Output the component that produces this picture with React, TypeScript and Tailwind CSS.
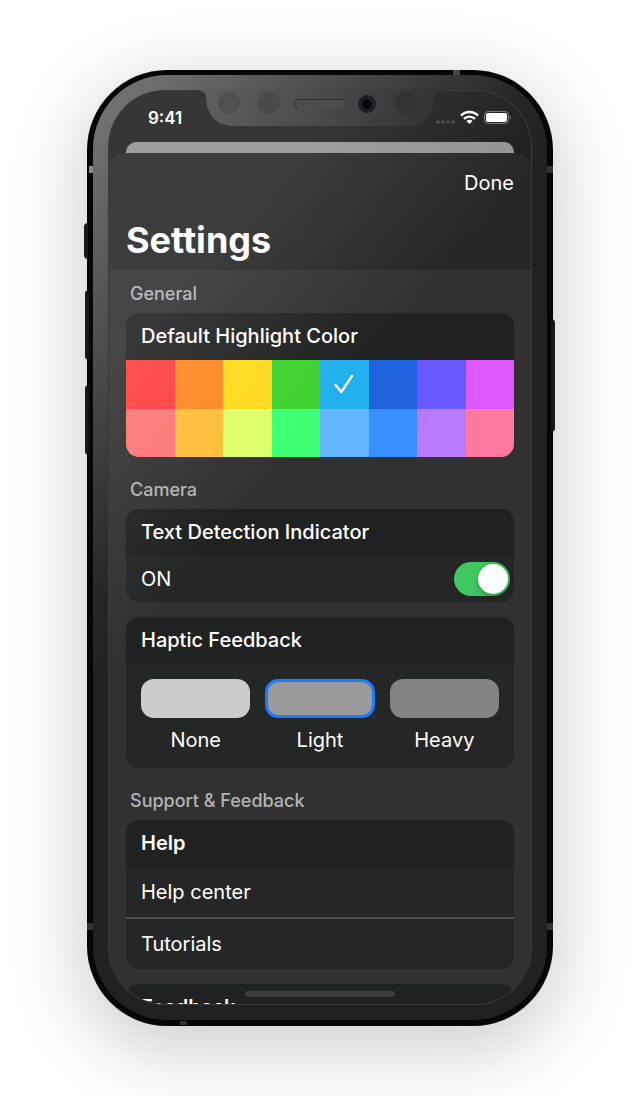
import { useState, type ReactNode } from "react";

const SWATCHES = [
  { name: "Red", color: "bg-[#ff3e3e]" },
  { name: "Orange", color: "bg-[#ff8822]" },
  { name: "Yellow", color: "bg-[#ffda1c]" },
  { name: "Green", color: "bg-[#3ed22f]" },
  { name: "Sky blue", color: "bg-[#22afed]" },
  { name: "Blue", color: "bg-[#1f62dc]" },
  { name: "Indigo", color: "bg-[#6a58ff]" },
  { name: "Magenta", color: "bg-[#db59ff]" },
  { name: "Light red", color: "bg-[#ff7575]" },
  { name: "Light orange", color: "bg-[#ffbd38]" },
  { name: "Lime", color: "bg-[#dfff69]" },
  { name: "Mint", color: "bg-[#3dff73]" },
  { name: "Light sky blue", color: "bg-[#64b5ff]" },
  { name: "Light blue", color: "bg-[#388fff]" },
  { name: "Lavender", color: "bg-[#b87aff]" },
  { name: "Pink", color: "bg-[#ff789f]" },
];

const HAPTICS = [
  { name: "None", color: "bg-[#cccccc]" },
  { name: "Light", color: "bg-[#9a9a9a]" },
  { name: "Heavy", color: "bg-[#838383]" },
];

function Notch() {
  return (
    <svg
      className="pointer-events-none absolute top-[14px] left-1/2 z-20 h-[37px] w-[244px] -translate-x-1/2"
      viewBox="0 -1 244 37"
      aria-hidden="true"
    >
      <defs>
        <linearGradient id="notch" gradientUnits="userSpaceOnUse" x1="0" y1="0" x2="240" y2="60">
          <stop offset="0" stopColor="#606060" />
          <stop offset="0.5" stopColor="#4a4a4a" />
          <stop offset="1" stopColor="#303030" />
        </linearGradient>
        <pattern id="mesh" width="3" height="3" patternUnits="userSpaceOnUse">
          <rect width="3" height="3" fill="#505050" />
          <circle cx="1" cy="1" r="0.8" fill="#404040" />
        </pattern>
      </defs>
      <path
        d="M2 -1H242V1C238 1 236 3 236 8C235 25 226 36 208 36H36C18 36 9 25 8 8C8 3 6 1 2 1Z"
        fill="url(#notch)"
      />
      <circle cx="31" cy="13" r="11" fill="#505050" />
      <circle cx="71" cy="13" r="11" fill="#4a4a4a" />
      <circle cx="208" cy="13" r="11" fill="#323232" />
      <rect x="96.5" y="9.5" width="51" height="9" rx="4.5" fill="url(#mesh)" />
      <path
        d="M100 18C94 15 96 9.500 101 9.500H143C147 9.500 148.500 13 147 16"
        fill="none"
        stroke="#303030"
      />
      <circle cx="169" cy="14" r="9" fill="#1b1d27" />
      <circle cx="169" cy="14" r="4.5" fill="#05060b" />
    </svg>
  );
}

function StatusIcons() {
  return (
    <svg className="h-4 w-[76px]" viewBox="0 0 76 16" aria-hidden="true">
      <g fill="#484a4a">
        <circle cx="3" cy="12" r="1.8" />
        <circle cx="8" cy="12" r="1.8" />
        <circle cx="13" cy="12" r="1.8" />
        <circle cx="18" cy="12" r="1.8" />
      </g>
      <g fill="none" stroke="#ffffff" strokeWidth="2.4">
        <path d="M26 5.6C30.8 0.8 38.2 0.8 43 5.6" />
        <path d="M29 8.9C32.2 5.9 36.8 5.9 40 8.9" />
      </g>
      <path d="M31.5 11C33.2 9.3 35.8 9.3 37.5 11L34.5 14Z" fill="#ffffff" />
      <rect x="49.5" y="1.5" width="24" height="12" rx="3.5" fill="none" stroke="#777979" />
      <rect x="51" y="3" width="21" height="9" rx="2" fill="#ffffff" />
      <path d="M74.8 5.5C76.2 6.2 76.2 8.8 74.8 9.5Z" fill="#777979" />
    </svg>
  );
}

function SectionTitle({ children }: { children: ReactNode }) {
  return <h2 className="mb-2 px-1 text-lg leading-[22px] font-medium text-[#b4b4b4]">{children}</h2>;
}

function Card({ title, strong = false, children }: { title: string; strong?: boolean; children?: ReactNode }) {
  return (
    <section className="overflow-hidden rounded-[13px] bg-[#252626]">
      <h3
        className={`bg-[#202121] px-[15px] py-[11px] text-xl leading-[25px] ${strong ? "font-semibold" : "font-medium"}`}
      >
        {title}
      </h3>
      {children}
    </section>
  );
}

function HighlightPicker() {
  const [selected, setSelected] = useState("Sky blue");
  return (
    <div role="radiogroup" aria-label="Default Highlight Color" className="grid grid-cols-8">
      {SWATCHES.map(({ name, color }) => (
        <label key={name} className={`relative grid aspect-square place-items-center ${color}`}>
          <input
            type="radio"
            name="highlight"
            aria-label={name}
            checked={selected === name}
            onChange={() => setSelected(name)}
            className="absolute inset-0 cursor-pointer appearance-none"
          />
          {selected === name && (
            <svg className="pointer-events-none relative h-5 w-5" viewBox="0 0 20 20" aria-hidden="true">
              <path
                d="M1.5 11L7.3 18L18 2"
                fill="none"
                stroke="#ffffff"
                strokeWidth="2.4"
                strokeLinecap="round"
                strokeLinejoin="round"
              />
            </svg>
          )}
        </label>
      ))}
    </div>
  );
}

function DetectionRow() {
  const [on, setOn] = useState(true);
  return (
    <label className="flex items-center justify-between py-[6px] pr-1 pl-[15px] text-xl leading-6">
      <span>{on ? "ON" : "OFF"}</span>
      <input
        type="checkbox"
        role="switch"
        aria-label="Text Detection Indicator"
        checked={on}
        onChange={() => setOn(!on)}
        className="flex h-[34px] w-14 cursor-pointer appearance-none items-center rounded-full bg-[#555555] px-0.5 before:h-[30px] before:w-[30px] before:rounded-full before:bg-white before:shadow-[0_3px_6px_rgba(0,0,0,0.25)] checked:justify-end checked:bg-[#3fc85f]"
      />
    </label>
  );
}

function HapticPicker() {
  const [selected, setSelected] = useState("Light");
  return (
    <div role="radiogroup" aria-label="Haptic Feedback" className="grid grid-cols-3 gap-[15px] px-[15px] pt-[15px] pb-4">
      {HAPTICS.map(({ name, color }) => (
        <label key={name} className="flex cursor-pointer flex-col items-center gap-[10px] text-xl leading-6">
          <input
            type="radio"
            name="haptic"
            checked={selected === name}
            onChange={() => setSelected(name)}
            className={`h-[39px] w-full cursor-pointer appearance-none rounded-[13px] checked:border-[3px] checked:border-[#1d7aff] ${color}`}
          />
          {name}
        </label>
      ))}
    </div>
  );
}

function Hardware() {
  return (
    <div aria-hidden="true" className="pointer-events-none">
      <span className="absolute top-[16%] -left-[3px] h-9 w-1 rounded-l-sm bg-[#1a1a1d]" />
      <span className="absolute top-[23%] -left-0.5 h-[70px] w-1 rounded-l-sm bg-[#16171a]" />
      <span className="absolute top-[33%] -left-0.5 h-[70px] w-1 rounded-l-sm bg-[#16171a]" />
      <span className="absolute top-[26%] -right-0.5 h-[113px] w-1 rounded-r-sm bg-[#16171a]" />
      <span className="absolute top-[10%] left-[2px] h-[7px] w-1 bg-[#8a8a8a]" />
      <span className="absolute top-[10%] right-0 h-[7px] w-[6px] bg-[#333333]" />
      <span className="absolute bottom-[10%] left-0 h-[7px] w-[6px] bg-[#333333]" />
      <span className="absolute right-0 bottom-[10%] h-[7px] w-[6px] bg-[#333333]" />
      <span className="absolute top-0 right-[20%] h-[5px] w-[7px] bg-[#454545]" />
      <span className="absolute bottom-px left-[20%] h-1 w-[7px] bg-[#333333]" />
    </div>
  );
}

export default function App() {
  return (
    <div className="flex min-h-screen items-center justify-center bg-white px-5 py-[70px] font-['Inter','Liberation_Sans',sans-serif] text-white">
      <div className="relative flex aspect-[466/956] w-full max-w-[466px] rounded-[80px] bg-[#050607] p-[6px] pt-[5px] shadow-[0_18px_76px_6px_rgba(0,0,0,0.2)]">
        <Hardware />
        <div className="relative flex min-w-0 flex-1 rounded-[74px] bg-[linear-gradient(130deg,#787878_0%,#6c6c6c_6%,#565656_15%,#484848_21%,#363636_29%,#252525_36%,#212121_42%)] p-[15px]">
          <Notch />
          <div className="relative flex min-w-0 flex-1 flex-col overflow-hidden rounded-[57px] border border-white/12 bg-[#1e2020]">
            <div className="flex h-[51px] shrink-0 items-center justify-between pt-[3px] pr-5 pl-[39px]">
              <span className="text-[17px] leading-5 font-semibold">9:41</span>
              <StatusIcons />
            </div>
            <div className="mx-[17px] h-[11px] shrink-0 rounded-t-[10px] bg-[#939393]" />

            <header className="shrink-0 rounded-t-[14px] bg-[#272727] px-[17px] pt-[18px] pb-2">
              <div className="flex justify-end">
                <button type="button" className="cursor-pointer text-xl leading-6">
                  Done
                </button>
              </div>
              <h1 className="mt-[23px] text-4xl leading-[44px] font-bold">Settings</h1>
            </header>

            <main className="min-h-0 flex-1 overflow-hidden bg-[#313132] px-[17px] pt-[13px]">
              <SectionTitle>General</SectionTitle>
              <Card title="Default Highlight Color">
                <HighlightPicker />
              </Card>

              <div className="mt-[22px]">
                <SectionTitle>Camera</SectionTitle>
                <div className="flex flex-col gap-[15px]">
                  <Card title="Text Detection Indicator">
                    <DetectionRow />
                  </Card>
                  <Card title="Haptic Feedback">
                    <HapticPicker />
                  </Card>
                </div>
              </div>

              <div className="mt-[22px]">
                <SectionTitle>Support &amp; Feedback</SectionTitle>
                <div className="flex flex-col gap-[15px]">
                  <Card title="Help" strong>
                    <nav className="flex flex-col divide-y-2 divide-[#4b4b4b] text-xl leading-6">
                      <a href="#help-center" className="px-[15px] py-[13px]">
                        Help center
                      </a>
                      <a href="#tutorials" className="px-[15px] py-[13px]">
                        Tutorials
                      </a>
                    </nav>
                  </Card>
                  <Card title="Feedback" strong />
                </div>
              </div>
            </main>

            <div className="pointer-events-none absolute inset-0 bg-[linear-gradient(130deg,rgba(255,255,255,0.1)_0%,rgba(255,255,255,0.1)_20%,rgba(255,255,255,0)_41%)]" />
            <div className="pointer-events-none absolute bottom-[7px] left-1/2 h-[6px] w-[150px] -translate-x-1/2 rounded-full bg-[#3c3e3d]" />
          </div>
        </div>
      </div>
    </div>
  );
}
